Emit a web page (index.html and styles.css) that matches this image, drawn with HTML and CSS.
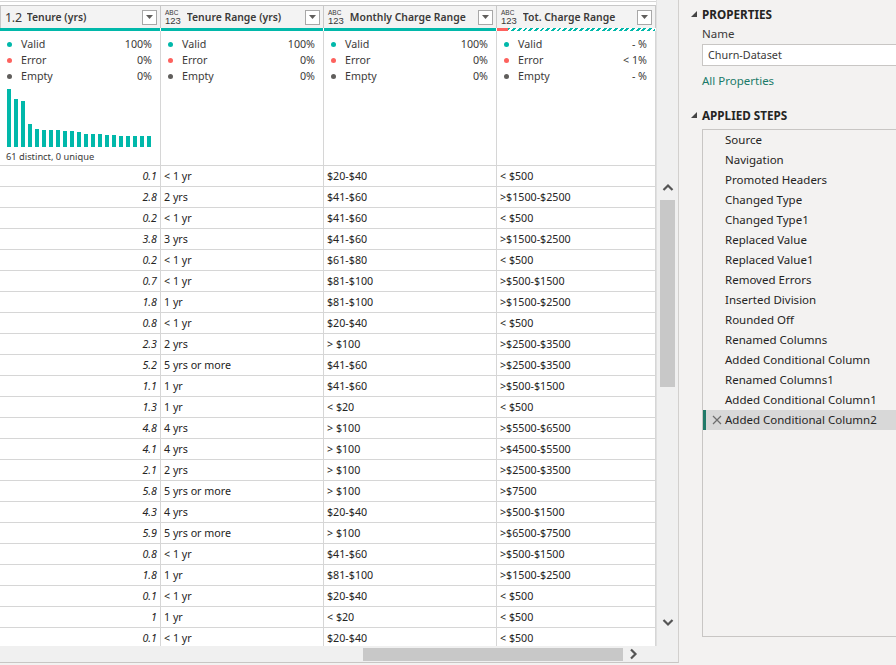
FILE: index.html
```html
<!DOCTYPE html>
<html>
<head>
<meta charset="utf-8">
<link rel="stylesheet" href="styles.css">
</head>
<body>
<div class="app">
  <div class="left">
    <div class="main">
      <div class="grid">
        <div class="hdr">
          <div class="hc c1"><span class="t12">1.2</span><span class="hname">Tenure (yrs)</span><span class="dd"><svg width="7" height="4" viewBox="0 0 7 4"><polygon points="0,0 7,0 3.5,4" fill="#605e5c"/></svg></span></div>
          <div class="hc c2"><span class="tabc"><span class="ta">ABC</span><span class="tb">123</span></span><span class="hname">Tenure Range (yrs)</span><span class="dd"><svg width="7" height="4" viewBox="0 0 7 4"><polygon points="0,0 7,0 3.5,4" fill="#605e5c"/></svg></span></div>
          <div class="hc c3"><span class="tabc"><span class="ta">ABC</span><span class="tb">123</span></span><span class="hname">Monthly Charge Range</span><span class="dd"><svg width="7" height="4" viewBox="0 0 7 4"><polygon points="0,0 7,0 3.5,4" fill="#605e5c"/></svg></span></div>
          <div class="hc c4"><span class="tabc"><span class="ta">ABC</span><span class="tb">123</span></span><span class="hname">Tot. Charge Range</span><span class="dd"><svg width="7" height="4" viewBox="0 0 7 4"><polygon points="0,0 7,0 3.5,4" fill="#605e5c"/></svg></span></div>
        </div>
        <div class="qbar">
          <div class="qb c1 teal"></div>
          <div class="qb c2 teal"></div>
          <div class="qb c3 teal"></div>
          <div class="qb c4 mixed"><span class="err"></span><span class="hatch"></span></div>
        </div>
        <div class="prof">
          <div class="pc c1">
            <div class="stat"><span class="dot dv"></span><span class="sl">Valid</span><span class="sv">100%</span></div>
            <div class="stat"><span class="dot de"></span><span class="sl">Error</span><span class="sv">0%</span></div>
            <div class="stat"><span class="dot dm"></span><span class="sl">Empty</span><span class="sv">0%</span></div>
            <div class="hist">
              <span style="height:58px"></span><span style="height:48px"></span><span style="height:46px"></span><span style="height:23px"></span><span style="height:18px"></span><span style="height:17px"></span><span style="height:17px"></span><span style="height:17px"></span><span style="height:16px"></span><span style="height:16px"></span><span style="height:15px"></span><span style="height:13px"></span><span style="height:13px"></span><span style="height:13px"></span><span style="height:12px"></span><span style="height:12px"></span><span style="height:11px"></span><span style="height:11px"></span><span style="height:11px"></span><span style="height:11px"></span><span style="height:11px"></span>
            </div>
            <div class="distinct">61 distinct, 0 unique</div>
          </div>
          <div class="pc c2">
            <div class="stat"><span class="dot dv"></span><span class="sl">Valid</span><span class="sv">100%</span></div>
            <div class="stat"><span class="dot de"></span><span class="sl">Error</span><span class="sv">0%</span></div>
            <div class="stat"><span class="dot dm"></span><span class="sl">Empty</span><span class="sv">0%</span></div>
          </div>
          <div class="pc c3">
            <div class="stat"><span class="dot dv"></span><span class="sl">Valid</span><span class="sv">100%</span></div>
            <div class="stat"><span class="dot de"></span><span class="sl">Error</span><span class="sv">0%</span></div>
            <div class="stat"><span class="dot dm"></span><span class="sl">Empty</span><span class="sv">0%</span></div>
          </div>
          <div class="pc c4">
            <div class="stat"><span class="dot dv"></span><span class="sl">Valid</span><span class="sv">- %</span></div>
            <div class="stat"><span class="dot de"></span><span class="sl">Error</span><span class="sv">&lt; 1%</span></div>
            <div class="stat"><span class="dot dm"></span><span class="sl">Empty</span><span class="sv">- %</span></div>
          </div>
        </div>
        <div class="rows" id="rows"></div>
      </div>
      <div class="vscroll">
        <svg class="arr" width="12" height="8" viewBox="0 0 12 8"><polyline points="1.5,7 6,2.5 10.5,7" fill="none" stroke="#555" stroke-width="2.2"/></svg>
        <div class="vthumb"></div>
        <div class="vspace"></div>
        <svg class="arr" width="12" height="8" viewBox="0 0 12 8"><polyline points="1.5,1 6,5.5 10.5,1" fill="none" stroke="#555" stroke-width="2.2"/></svg>
      </div>
    </div>
    <div class="hscroll">
      <div class="hthumb"></div>
      <svg class="harr" width="8" height="12" viewBox="0 0 8 12"><polyline points="1,1.5 5.5,6 1,10.5" fill="none" stroke="#555" stroke-width="2.2"/></svg>
    </div>
  </div>
  <div class="right">
    <div class="sec"><svg class="tri" width="6" height="6" viewBox="0 0 6 6"><polygon points="6,0 6,6 0,6" fill="#444"/></svg><span>PROPERTIES</span></div>
    <div class="lbl">Name</div>
    <div class="inp">Churn-Dataset</div>
    <div class="link">All Properties</div>
    <div class="sec sec2"><svg class="tri" width="6" height="6" viewBox="0 0 6 6"><polygon points="6,0 6,6 0,6" fill="#444"/></svg><span>APPLIED STEPS</span></div>
    <div class="steps">
      <div class="step">Source</div>
      <div class="step">Navigation</div>
      <div class="step">Promoted Headers</div>
      <div class="step">Changed Type</div>
      <div class="step">Changed Type1</div>
      <div class="step">Replaced Value</div>
      <div class="step">Replaced Value1</div>
      <div class="step">Removed Errors</div>
      <div class="step">Inserted Division</div>
      <div class="step">Rounded Off</div>
      <div class="step">Renamed Columns</div>
      <div class="step">Added Conditional Column</div>
      <div class="step">Renamed Columns1</div>
      <div class="step">Added Conditional Column1</div>
      <div class="step sel"><svg class="x" width="10" height="10" viewBox="0 0 10 10"><path d="M1,1 L9,9 M9,1 L1,9" stroke="#6e6e6e" stroke-width="1.2"/></svg>Added Conditional Column2</div>
    </div>
  </div>
</div>
<script src="app.js"></script>
</body>
</html>
```

FILE: app.js
```js
var data = [
  ["0.1","< 1 yr","$20-$40","< $500"],
  ["2.8","2 yrs","$41-$60",">$1500-$2500"],
  ["0.2","< 1 yr","$41-$60","< $500"],
  ["3.8","3 yrs","$41-$60",">$1500-$2500"],
  ["0.2","< 1 yr","$61-$80","< $500"],
  ["0.7","< 1 yr","$81-$100",">$500-$1500"],
  ["1.8","1 yr","$81-$100",">$1500-$2500"],
  ["0.8","< 1 yr","$20-$40","< $500"],
  ["2.3","2 yrs","> $100",">$2500-$3500"],
  ["5.2","5 yrs or more","$41-$60",">$2500-$3500"],
  ["1.1","1 yr","$41-$60",">$500-$1500"],
  ["1.3","1 yr","< $20","< $500"],
  ["4.8","4 yrs","> $100",">$5500-$6500"],
  ["4.1","4 yrs","> $100",">$4500-$5500"],
  ["2.1","2 yrs","> $100",">$2500-$3500"],
  ["5.8","5 yrs or more","> $100",">$7500"],
  ["4.3","4 yrs","$20-$40",">$500-$1500"],
  ["5.9","5 yrs or more","> $100",">$6500-$7500"],
  ["0.8","< 1 yr","$41-$60",">$500-$1500"],
  ["1.8","1 yr","$81-$100",">$1500-$2500"],
  ["0.1","< 1 yr","$20-$40","< $500"],
  ["1","1 yr","< $20","< $500"],
  ["0.1","< 1 yr","$20-$40","< $500"]
];
var rows = document.getElementById("rows");
data.forEach(function (r) {
  var row = document.createElement("div");
  row.className = "row";
  r.forEach(function (v, i) {
    var c = document.createElement("div");
    c.className = "cell c" + (i + 1) + (i === 0 ? " num" : "");
    c.textContent = v;
    row.appendChild(c);
  });
  rows.appendChild(row);
});
```

FILE: styles.css
```css
* { box-sizing: border-box; }
html, body { margin: 0; padding: 0; }
body {
  width: 896px; height: 665px; overflow: hidden;
  font-family: "Noto Sans", "Open Sans", sans-serif;
  color: #252423;
  background: #f3f2f1;
}
.app { display: flex; height: 665px; }
.left {
  width: 679px; flex: none; display: flex; flex-direction: column;
  border-right: 1px solid #d2d0ce; height: 663px;
  border-bottom: 1px solid #c8c6c4;
  background: #fff;
}
.main { flex: 1; display: flex; min-height: 0; }
.grid {
  width: 656px; flex: none; overflow: hidden;
  border-top: 1px solid #d6d6d6; margin-top: 1px; padding-top: 3px;
  background: #fff;
}
.c1 { width: 161px; }
.c2 { width: 163px; }
.c3 { width: 173px; }
.c4 { width: 159px; }
.hdr { display: flex; height: 23px; }
.hc {
  display: flex; align-items: center; height: 23px;
  background: #f3f3f3; border: 1px solid #c8c8c8; border-left: none; border-bottom: none;
  padding: 0 3px 0 4px;
  font-size: 10.4px; font-weight: 600; color: #3b3a39;
}
.c1.hc { border-left: 1px solid #c8c8c8; padding-left: 4px; }
.t12 { font-size: 12.5px; font-weight: 400; margin-right: 5px; color: #3b3a39; letter-spacing: -0.3px; }
.tabc {
  display: flex; flex-direction: column; margin-right: 6px; font-weight: 400;
  font-family: "Liberation Sans", Arial, sans-serif; color: #3b3a39;
}
.ta { font-size: 6.5px; line-height: normal; }
.tb { font-size: 9.5px; line-height: normal; margin-top: -1px; }
.hname { flex: 1; white-space: nowrap; overflow: hidden; }
.dd {
  width: 15px; height: 15px; border: 1px solid #a8a8a8; background: #fff;
  display: flex; align-items: center; justify-content: center; flex: none;
}
.qbar { display: flex; height: 3px; }
.qb { height: 3px; border-right: 1px solid #fff; }
.teal { background: #01b8aa; }
.mixed { display: flex; }
.mixed .err { width: 11px; background: #fd625e; }
.mixed .hatch {
  flex: 1;
  background: repeating-linear-gradient(-45deg, #01b8aa 0 2px, #fff 2px 4px);
}
.prof { display: flex; height: 135px; border-bottom: 1px solid #d6d6d6; }
.pc { border-right: 1px solid #d6d6d6; padding: 5px 8px 0 6px; }
.stat { display: flex; align-items: center; height: 16px; font-size: 10.7px; color: #3b3a39; }
.dot { width: 5px; height: 5px; border-radius: 50%; margin-right: 9px; margin-left: 1px; }
.dv { background: #01b8aa; }
.de { background: #fd625e; }
.dm { background: #605e5c; }
.sl { flex: 1; }
.sv { text-align: right; }
.hist { display: flex; align-items: flex-end; gap: 3px; height: 59px; margin-top: 4px; padding-left: 1px; }
.hist span { width: 4px; background: #01b8aa; display: block; }
.distinct { font-size: 9.3px; color: #3b3a39; margin-top: 3px; }
.row { display: flex; height: 21px; border-bottom: 1px solid #d6d6d6; }
.cell {
  border-right: 1px solid #d6d6d6; font-size: 10.7px; line-height: 20px;
  padding: 0 3px; white-space: nowrap; overflow: hidden; color: #252423;
}
.cell.num { text-align: right; font-style: italic; }
.vscroll {
  width: 22px; flex: none; background: #f0f0f0; display: flex; flex-direction: column; align-items: center;
  padding-top: 183px; border-left: 1px solid #e0e0e0;
}
.vscroll .arr { flex: none; }
.vthumb { width: 15px; height: 187px; background: #c8c8c8; margin-top: 9px; flex: none; }
.vspace { flex: 1; }
.vscroll .arr:last-child { margin-bottom: 19px; }
.hscroll {
  height: 16px; flex: none; background: #f0f0f0; display: flex; align-items: center;
  padding-left: 363px;
}
.hthumb { width: 260px; height: 13px; background: #c8c8c8; }
.harr { margin-left: 7px; }
.right { flex: 1; padding: 7px 0 0 12px; overflow: hidden; }
.sec { display: flex; align-items: center; font-size: 11.7px; font-weight: 700; color: #252423; height: 14px; }
.tri { margin-right: 5px; }
.lbl { font-size: 11.5px; margin: 5px 0 0 11px; height: 16px; color: #3b3a39; line-height: 16px; }
.inp {
  margin: 2px 0 0 11px; height: 22px; width: 220px; background: #fff; border: 1px solid #c8c6c4;
  font-size: 10.8px; line-height: 20px; padding-left: 5px; color: #3b3a39;
}
.link { font-size: 11.5px; color: #1a7a69; margin: 7px 0 0 11px; height: 16px; line-height: 16px; }
.sec2 { margin-top: 19px; }
.steps {
  margin: 7px 0 0 11px; width: 220px; height: 508px; border: 1px solid #c8c6c4;
}
.step { height: 20px; line-height: 20px; font-size: 11.5px; padding-left: 22px; color: #252423; white-space: nowrap; position: relative; }
.step.sel { background: #d8d8d8; border-left: 3px solid #217a69; padding-left: 19px; }
.x { position: absolute; left: 6px; top: 5px; }
```
